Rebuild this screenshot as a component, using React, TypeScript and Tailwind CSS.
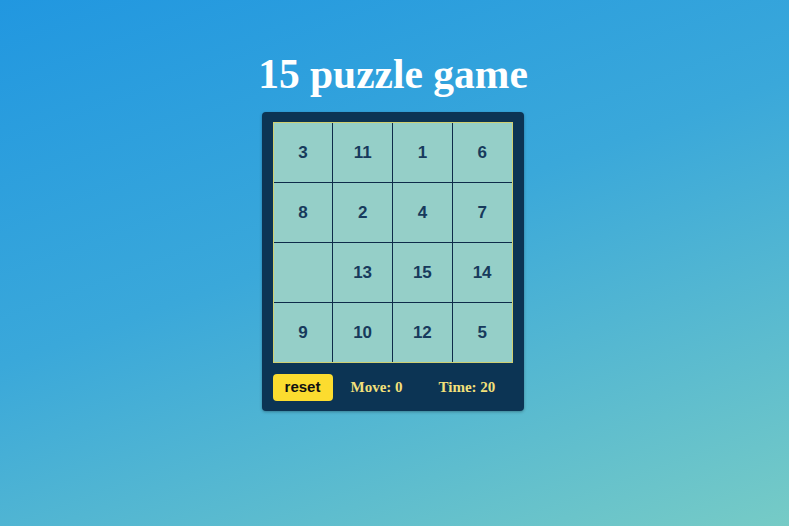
const TILES = [3, 11, 1, 6, 8, 2, 4, 7, 0, 13, 15, 14, 9, 10, 12, 5]

export default function App() {
  return (
    <div className="min-h-screen w-full bg-[linear-gradient(160deg,#2197e0_0%,#3aa8da_45%,#76cbc6_100%)] flex flex-col items-center pt-[48px]">
      <h1 className="mr-[3px] text-white text-[41.5px] leading-[52px] font-bold font-['Liberation_Serif',serif]">
        15 puzzle game
      </h1>
      <div className="mr-[4px] mt-[12px] w-[262px] rounded-[4px] bg-[#0c3454] px-[11px] pt-[10px] pb-[10px] shadow-[0_1px_3px_rgba(0,0,0,0.3)]">
        <div className="border border-[#cfcf72] bg-[#0e2c4a] grid grid-cols-4 gap-px">
          {TILES.map((n, i) => (
            <div
              key={i}
              className="h-[59px] bg-[#95cfc8] flex items-center justify-center text-[17px] font-bold text-[#173a5c] font-['Liberation_Sans',Arial,sans-serif]"
            >
              {n === 0 ? '' : n}
            </div>
          ))}
        </div>
        <div className="mt-[11px] flex items-center">
          <button className="w-[60px] h-[27px] rounded-[4px] bg-[#fcdc2f] text-[15px] font-bold text-[#111] font-['Liberation_Sans',Arial,sans-serif]">
            reset
          </button>
          <span className="ml-[18px] text-[15px] font-bold text-[#f3e07a] font-['Liberation_Serif',serif]">Move: 0</span>
          <span className="ml-[36px] text-[15px] font-bold text-[#f3e07a] font-['Liberation_Serif',serif]">Time: 20</span>
        </div>
      </div>
    </div>
  )
}
